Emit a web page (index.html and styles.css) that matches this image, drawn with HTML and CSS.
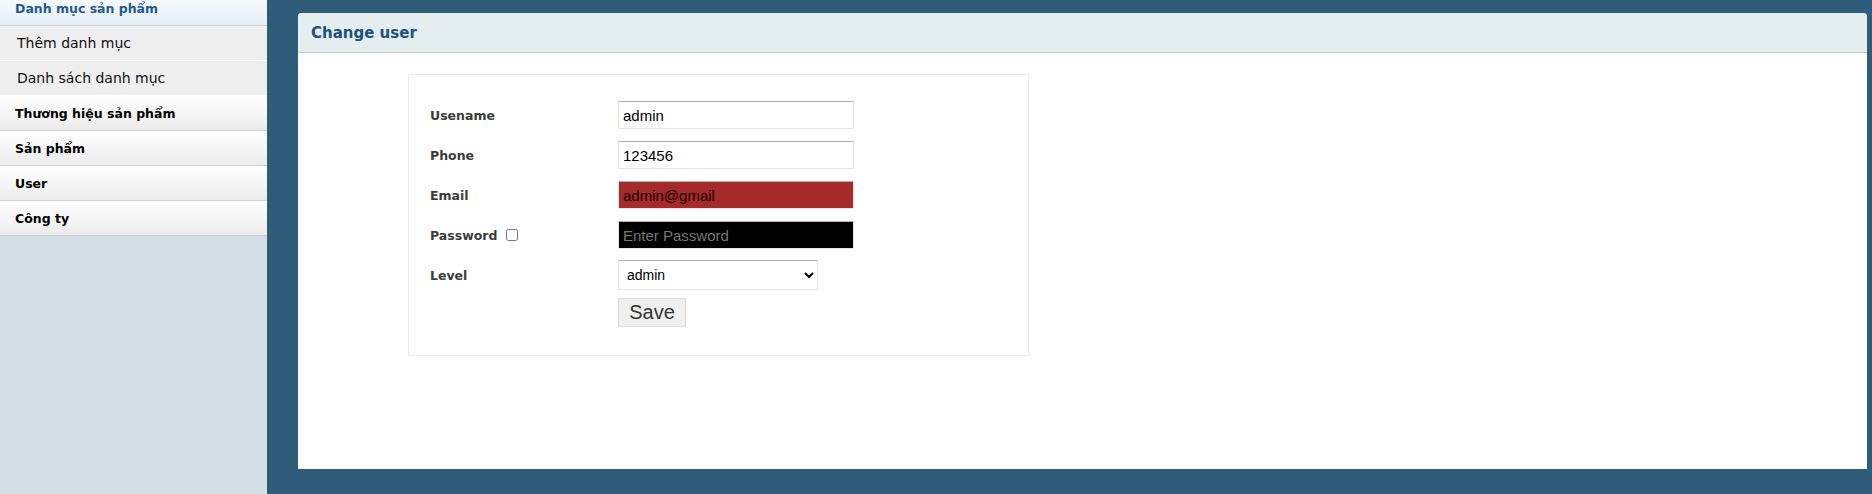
FILE: index.html
```html
<!DOCTYPE html>
<html lang="vi">
<head>
<meta charset="utf-8">
<title>Change user</title>
<link rel="stylesheet" href="styles.css">
</head>
<body>
<div class="layout">
  <aside class="sidebar">
    <div class="menu-head active">Danh mục sản phẩm</div>
    <div class="menu-sub">Thêm danh mục</div>
    <div class="menu-sub">Danh sách danh mục</div>
    <div class="menu-head">Thương hiệu sản phẩm</div>
    <div class="menu-head">Sản phẩm</div>
    <div class="menu-head">User</div>
    <div class="menu-head">Công ty</div>
  </aside>
  <main class="main">
    <section class="panel">
      <header class="panel-head">Change user</header>
      <div class="panel-body">
        <form class="form-box">
          <table class="form-table">
            <tr>
              <td class="lbl">Usename</td>
              <td><input class="field" type="text" value="admin"></td>
            </tr>
            <tr>
              <td class="lbl">Phone</td>
              <td><input class="field" type="text" value="123456"></td>
            </tr>
            <tr>
              <td class="lbl">Email</td>
              <td><input class="field email" type="text" value="admin@gmail"></td>
            </tr>
            <tr>
              <td class="lbl">Password <input class="chk" type="checkbox"></td>
              <td><input class="field pass" type="password" placeholder="Enter Password"></td>
            </tr>
            <tr>
              <td class="lbl">Level</td>
              <td><select class="sel"><option>admin</option><option>user</option></select></td>
            </tr>
            <tr>
              <td></td>
              <td class="btn-cell"><button type="button" class="save">Save</button></td>
            </tr>
          </table>
        </form>
      </div>
    </section>
  </main>
</div>
</body>
</html>
```

FILE: styles.css
```css
html, body {
  margin: 0;
  padding: 0;
  height: 100%;
}
body {
  font-family: "DejaVu Sans", Verdana, sans-serif;
  background: #2e5c79;
  overflow: hidden;
}
.layout {
  display: flex;
  height: 494px;
}
.sidebar {
  width: 267px;
  flex: none;
  background: #d1dee4;
}
.menu-head {
  height: 34px;
  line-height: 35px;
  padding-left: 15px;
  font-size: 12.5px;
  font-weight: bold;
  color: #000;
  background: linear-gradient(#ffffff, #ececec);
  border-bottom: 1px solid #cfcfcf;
}
.menu-head.active {
  height: 25px;
  line-height: 17px;
  color: #1f5a92;
  background: linear-gradient(#f6f9fc, #e6eef6);
}
.menu-sub {
  height: 34px;
  line-height: 35px;
  padding-left: 17px;
  font-size: 14px;
  color: #111;
  background: #eeeeee;
  border-bottom: 1px solid #ffffff;
}
.main {
  flex: 1;
  padding: 13px 5px 25px 31px;
  display: flex;
}
.panel {
  flex: 1;
  background: #fff;
  border-radius: 4px 4px 0 0;
  display: flex;
  flex-direction: column;
}
.panel-head {
  height: 39px;
  line-height: 41px;
  padding-left: 13px;
  background: #e4eef1;
  border-bottom: 1px solid #b8ccd6;
  border-radius: 4px 4px 0 0;
  font-size: 15px;
  font-weight: bold;
  color: #1e4f7e;
}
.panel-body {
  padding: 21px 0 0 110px;
}
.form-box {
  width: 621px;
  height: 282px;
  border: 1px solid #e3ecef;
  box-sizing: border-box;
  padding: 20px 0 0 16px;
}
.form-table {
  border-collapse: collapse;
}
.form-table td {
  padding: 0;
  height: 40px;
  vertical-align: middle;
}
.form-table td.lbl {
  width: 193px;
  padding: 1px 0 0 5px;
  box-sizing: border-box;
  font-size: 12.5px;
  font-weight: bold;
  color: #3b3b3b;
}
.chk {
  width: 12px;
  height: 12px;
  margin: 0 0 0 4px;
  vertical-align: -1px;
}
.field {
  display: block;
  box-sizing: border-box;
  width: 236px;
  height: 28px;
  margin: 0;
  padding: 0 4px;
  font-family: "Liberation Sans", Arial, sans-serif;
  font-size: 15px;
  color: #000;
  background: #fff;
  border: 1px solid;
  border-color: #b2b2b2 #e4e4e4 #e4e4e4 #e4e4e4;
  outline: none;
}
.field.email {
  background: #a52a2a;
  color: #1a0000;
}
.field.pass {
  background: #000;
}
.field.pass::placeholder {
  color: #777;
}
.sel {
  display: block;
  box-sizing: border-box;
  width: 200px;
  height: 30px;
  margin: 0;
  padding: 0 4px;
  font-family: "Liberation Sans", Arial, sans-serif;
  font-size: 14px;
  color: #000;
  background: #fff;
  border: 1px solid;
  border-color: #b2b2b2 #e4e4e4 #e4e4e4 #e4e4e4;
}
.form-table td.btn-cell {
  height: auto;
  vertical-align: top;
  padding-top: 3px;
}
.save {
  display: block;
  box-sizing: border-box;
  width: 68px;
  height: 29px;
  padding: 0;
  font-family: "Liberation Sans", Arial, sans-serif;
  font-size: 20px;
  color: #333;
  background: #efefef;
  border: 1px solid #dcdcdc;
}
```
